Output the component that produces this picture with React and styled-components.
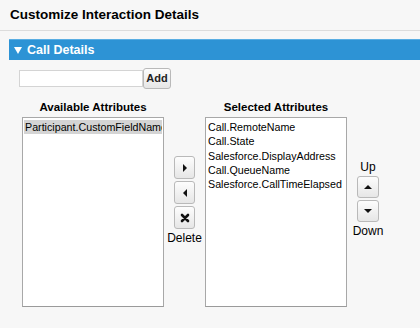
import React from 'react';
import styled, { createGlobalStyle } from 'styled-components';

const Global = createGlobalStyle`
  html, body {
    margin: 0;
    padding: 0;
    background: #f7f7f7;
    font-family: "Liberation Sans", Arial, sans-serif;
    color: #000;
  }
`

const Page = styled.div`
  width: 420px;
  height: 328px;
  overflow: hidden;
  background: #f7f7f7;
`

const Title = styled.h1`
  margin: 0;
  height: 31px;
  box-sizing: border-box;
  padding: 7px 0 0 10px;
  font-size: 13.5px;
  font-weight: bold;
  border-bottom: 1px solid #dcdcdc;
`

const SectionBar = styled.div`
  margin: 8px 0 0 9px;
  height: 21px;
  background: #2d93d5;
  border-top: 1px solid #5aaee3;
  box-sizing: border-box;
  display: flex;
  align-items: center;
  padding-left: 5px;
  color: #fff;
  font-size: 12.5px;
  font-weight: bold;

  svg {
    margin-right: 5px;
  }
`

const AddRow = styled.div`
  display: flex;
  align-items: center;
  margin: 7px 0 0 19px;
  height: 22px;
`

const TextInput = styled.input`
  width: 124px;
  height: 17px;
  box-sizing: border-box;
  border: 1px solid #d4d4d4;
  background: #fff;
  margin: 0;
  padding: 0;
`

const Btn = styled.button`
  box-sizing: border-box;
  border: 1px solid #b9b9b9;
  border-radius: 3px;
  background: linear-gradient(#fdfdfd, #e6e6e6);
  padding: 0;
  margin: 0;
  font-family: "Liberation Sans", Arial, sans-serif;
  display: flex;
  align-items: center;
  justify-content: center;
  width: ${p => p.$w || 21}px;
  height: ${p => p.$h || 23}px;
  font-size: 11px;
  font-weight: bold;
  color: #222;
`

const Columns = styled.div`
  display: flex;
  margin: 7px 0 0 22px;
`

const ListCol = styled.div`
  width: 142px;
  display: flex;
  flex-direction: column;
  align-items: center;
`

const Heading = styled.div`
  font-size: 11.5px;
  font-weight: bold;
  height: 21px;
  display: flex;
  align-items: center;
`

const ListBox = styled.div`
  width: 142px;
  height: 190px;
  box-sizing: border-box;
  border: 1px solid #a8a8a8;
  border-bottom-color: #9a9a9a;
  background: #fff;
  padding: 2px 1px;
  overflow: hidden;
`

const Item = styled.div`
  font-size: 10.7px;
  line-height: 14.3px;
  padding-left: 1px;
  white-space: nowrap;
  overflow: hidden;
  background: ${p => (p.$selected ? '#d4d4d4' : 'transparent')};
`

const SideCol = styled.div`
  width: ${p => p.$w}px;
  display: flex;
  flex-direction: column;
  align-items: center;
  gap: 2px;
  padding-top: ${p => p.$top}px;
  font-size: 12px;
  line-height: 14px;
`

const Arrow = ({ dir }) => {
  const pts = {
    right: '2,0 6,4 2,8',
    left: '6,0 2,4 6,8',
    up: '0,6 4,2 8,6',
    down: '0,2 4,6 8,2'
  }[dir];
  return (
    <svg width="8" height="8" viewBox="0 0 8 8">
      <polygon points={pts} fill="#111" />
    </svg>
  );
};

const Cross = () => (
  <svg width="10" height="10" viewBox="0 0 10 10">
    <path d="M2 2 L8 8 M8 2 L2 8" stroke="#111" strokeWidth="2.6" strokeLinecap="round" />
  </svg>
);

const Caret = () => (
  <svg width="8" height="7" viewBox="0 0 8 7">
    <polygon points="0,0 8,0 4,7" fill="#fff" />
  </svg>
);

const available = ['Participant.CustomFieldName'];
const selected = [
  'Call.RemoteName',
  'Call.State',
  'Salesforce.DisplayAddress',
  'Call.QueueName',
  'Salesforce.CallTimeElapsed'
];

export default function App() {
  return (
    <Page>
      <Global />
      <Title>Customize Interaction Details</Title>
      <SectionBar>
        <Caret />Call Details
      </SectionBar>
      <AddRow>
        <TextInput type="text" />
        <Btn $w={28} $h={21}>Add</Btn>
      </AddRow>
      <Columns>
        <ListCol>
          <Heading>Available Attributes</Heading>
          <ListBox>
            {available.map((a, i) => (
              <Item key={a} $selected={i === 0}>{a}</Item>
            ))}
          </ListBox>
        </ListCol>
        <SideCol $w={41} $top={60}>
          <Btn><Arrow dir="right" /></Btn>
          <Btn><Arrow dir="left" /></Btn>
          <Btn><Cross /></Btn>
          <span>Delete</span>
        </SideCol>
        <ListCol>
          <Heading>Selected Attributes</Heading>
          <ListBox>
            {selected.map(a => (
              <Item key={a}>{a}</Item>
            ))}
          </ListBox>
        </ListCol>
        <SideCol $w={42} $top={64}>
          <span>Up</span>
          <Btn $w={22} $h={22}><Arrow dir="up" /></Btn>
          <Btn $w={22} $h={22}><Arrow dir="down" /></Btn>
          <span>Down</span>
        </SideCol>
      </Columns>
    </Page>
  );
}
